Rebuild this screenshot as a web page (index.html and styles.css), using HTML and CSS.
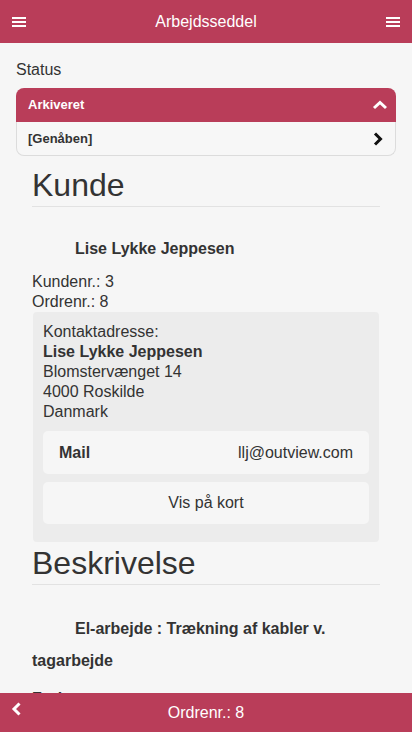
FILE: index.html
```html
<!DOCTYPE html>
<html lang="da">
<head>
<meta charset="utf-8">
<meta name="viewport" content="width=device-width, initial-scale=1">
<title>Arbejdsseddel</title>
<link rel="stylesheet" href="styles.css">
</head>
<body>
<header class="topbar">
  <button class="bar-btn" aria-label="Menu">
    <svg width="14" height="10" viewBox="0 0 14 10"><rect x="0" y="0" width="14" height="2" fill="#fff"/><rect x="0" y="4" width="14" height="2" fill="#fff"/><rect x="0" y="8" width="14" height="2" fill="#fff"/></svg>
  </button>
  <h1 class="bar-title">Arbejdsseddel</h1>
  <button class="bar-btn" aria-label="Menu">
    <svg width="14" height="10" viewBox="0 0 14 10"><rect x="0" y="0" width="14" height="2" fill="#fff"/><rect x="0" y="4" width="14" height="2" fill="#fff"/><rect x="0" y="8" width="14" height="2" fill="#fff"/></svg>
  </button>
</header>

<main class="content">
  <div class="status-label">Status</div>
  <div class="collapsible">
    <div class="coll-head">
      <span>Arkiveret</span>
      <svg width="16" height="10" viewBox="0 0 16 10"><polyline points="2,8 8,2.5 14,8" fill="none" stroke="#fff" stroke-width="3"/></svg>
    </div>
    <div class="coll-row">
      <span>[Genåben]</span>
      <svg width="10" height="14" viewBox="0 0 10 14"><polyline points="2,1.5 7.5,7 2,12.5" fill="none" stroke="#111" stroke-width="3"/></svg>
    </div>
  </div>

  <section class="section">
    <h2 class="sec-title">Kunde</h2>
    <p class="lead">Lise Lykke Jeppesen</p>
    <div class="meta">Kundenr.: 3<br>Ordrenr.: 8</div>
    <div class="contact">
      <div class="address">
        Kontaktadresse:<br>
        <b>Lise Lykke Jeppesen</b><br>
        Blomstervænget 14<br>
        4000 Roskilde<br>
        Danmark
      </div>
      <div class="mail-row">
        <b>Mail</b>
        <span>llj@outview.com</span>
      </div>
      <div class="map-btn">Vis på kort</div>
    </div>
  </section>

  <section class="section">
    <h2 class="sec-title tight">Beskrivelse</h2>
    <p class="lead desc">El-arbejde : Trækning af kabler v. tagarbejde</p>
    <p class="lead next">Forbrug</p>
  </section>
</main>

<footer class="bottombar">
  <button class="back-btn" aria-label="Tilbage">
    <svg width="12" height="14" viewBox="0 0 12 14"><polyline points="8.5,1.5 3,7 8.5,12.5" fill="none" stroke="#fff" stroke-width="3"/></svg>
  </button>
  <div class="bar-title">Ordrenr.: 8</div>
</footer>
</body>
</html>
```

FILE: styles.css
```css
html, body {
  margin: 0;
  padding: 0;
}
body {
  background: #f6f6f6;
  font-family: "Liberation Sans", Arial, sans-serif;
  font-size: 16px;
  color: #333;
  line-height: 20px;
}
.topbar {
  height: 43px;
  background: #b93d59;
  display: flex;
  align-items: center;
  justify-content: space-between;
  padding: 0 12px;
  box-sizing: border-box;
}
.bar-btn, .back-btn {
  background: none;
  border: 0;
  padding: 0;
  margin: 0;
  display: flex;
  align-items: center;
}
.bar-btn svg { display: block; }
.bar-title {
  margin: 0;
  font-size: 16px;
  font-weight: normal;
  color: #fff;
  line-height: 20px;
}
.content {
  padding: 17px 16px 60px;
}
.status-label {
  line-height: 20px;
  margin-bottom: 8px;
}
.collapsible {
  font-size: 13px;
  font-weight: bold;
}
.coll-head {
  height: 34px;
  background: #b93d59;
  color: #fff;
  border-radius: 8px 8px 0 0;
  display: flex;
  align-items: center;
  justify-content: space-between;
  padding: 0 8px 0 12px;
}
.coll-row {
  height: 33px;
  background: #f7f7f7;
  border: 1px solid #dcdcdc;
  border-top: 0;
  border-radius: 0 0 8px 8px;
  display: flex;
  align-items: center;
  justify-content: space-between;
  padding: 0 12px 0 11px;
}
.coll-head svg, .coll-row svg { display: block; }
.section {
  padding: 0 16px;
}
.sec-title {
  margin: 12px 0 0;
  font-size: 32px;
  font-weight: normal;
  line-height: 35px;
  padding-bottom: 3px;
  border-bottom: 1px solid #e2e2e2;
}
.sec-title.tight {
  margin-top: 4px;
}
.lead {
  margin: 26px 0 0;
  font-weight: bold;
  line-height: 32px;
  text-indent: 43px;
}
.lead.desc {
  margin-top: 28px;
}
.lead.next {
  text-indent: 0;
  margin-top: 6px;
}
.meta {
  margin-top: 7px;
  line-height: 20px;
}
.contact {
  margin: 0 1px;
  background: #ececec;
  border-radius: 4px;
  padding: 10px 10px 18px;
}
.address {
  line-height: 20px;
}
.mail-row {
  margin-top: 9px;
  height: 43px;
  background: #f6f6f6;
  border-radius: 5px;
  display: flex;
  align-items: center;
  justify-content: space-between;
  padding: 0 16px;
}
.map-btn {
  margin-top: 8px;
  height: 42px;
  background: #f6f6f6;
  border-radius: 5px;
  display: flex;
  align-items: center;
  justify-content: center;
}
.bottombar {
  position: fixed;
  left: 0;
  right: 0;
  bottom: 0;
  height: 39px;
  background: #b93d59;
  display: flex;
  align-items: center;
  justify-content: center;
}
.back-btn {
  position: absolute;
  left: 11px;
  top: 9px;
}
.back-btn svg { display: block; }
```
